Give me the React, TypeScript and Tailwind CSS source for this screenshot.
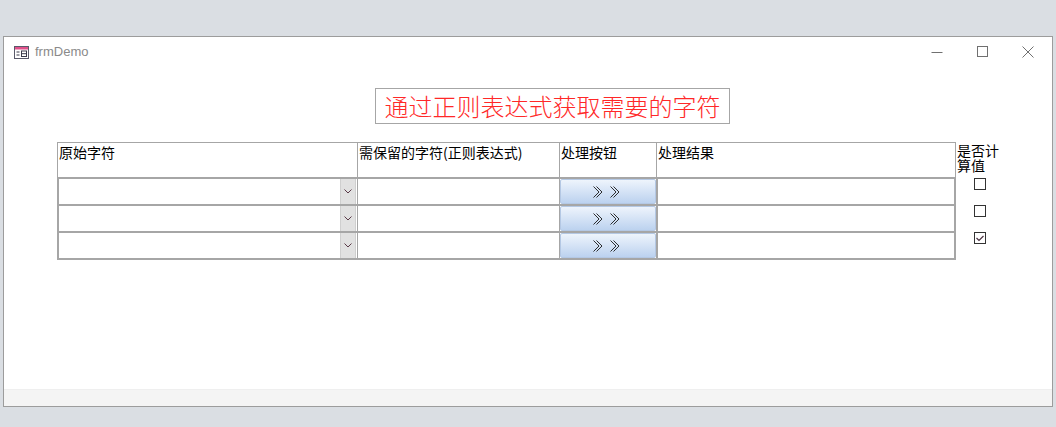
const cjk = "font-['SimSun','Noto_Sans_CJK_SC',sans-serif]";

const FormIcon = () => (
  <svg width="15" height="13" viewBox="0 0 15 13" className="shrink-0">
    <rect x="0.5" y="0.5" width="14" height="12" fill="#fff" stroke="#5a5a6a" />
    <rect x="1" y="1" width="13" height="2.5" fill="#e0508a" />
    <path d="M2.5 6h3M2.5 9h3" stroke="#3a3a4a" />
    <rect x="7.5" y="5" width="5" height="5.5" fill="#fff" stroke="#3a3a4a" />
    <path d="M7.5 7.7h5" stroke="#3a3a4a" />
  </svg>
);

const WindowControls = () => (
  <div className="flex items-center h-full">
    <svg width="12" height="12" viewBox="0 0 12 12" className="mr-[33px]">
      <path d="M0.5 6.5h11" stroke="#707070" />
    </svg>
    <svg width="12" height="12" viewBox="0 0 12 12" className="mr-[34px]">
      <rect x="1.5" y="0.5" width="10" height="10" fill="none" stroke="#707070" />
    </svg>
    <svg width="12" height="12" viewBox="0 0 12 12" className="mr-[18px]">
      <path d="M0.5 0.5l11 11M11.5 0.5l-11 11" stroke="#707070" />
    </svg>
  </div>
);

const Combo = () => (
  <div className="flex h-full bg-white">
    <div className="flex-1" />
    <div className="w-[16px] mr-[1px] bg-[#e1e1e1] border-x border-[#cfcfcf] flex items-center justify-center">
      <svg width="8" height="5" viewBox="0 0 8 5">
        <path d="M0.5 0.5l3.5 3.5 3.5-3.5" fill="none" stroke="#5a3a48" />
      </svg>
    </div>
  </div>
);

// hollow double chevrons, like the "》" glyph of the original font
const Chevrons = () => (
  <svg width="30" height="12" viewBox="0 0 30 12">
    {[0, 17].map((x) => (
      <g key={x} fill="none" stroke="#1a1a1a" strokeWidth="0.9">
        <path d={`M${x + 0.5} 0.5l5.5 5.5-5.5 5.5`} />
        <path d={`M${x + 3.5} 0.5l5.5 5.5-5.5 5.5`} />
      </g>
    ))}
  </svg>
);

const RunButton = () => (
  <div className="h-full rounded-[2px] border border-[#b4c8e4] bg-gradient-to-b from-[#eef4fc] to-[#bcd2ef] flex items-center justify-center">
    <Chevrons />
  </div>
);

const CheckBox = ({ checked }: { checked?: boolean }) => (
  <div className="w-[12px] h-[12px] border border-[#333] bg-white flex items-center justify-center">
    {checked && (
      <svg width="10" height="10" viewBox="0 0 10 10">
        <path d="M1.5 5l2.5 2.5 4.5-4.5" fill="none" stroke="#4a3040" strokeWidth="1.2" />
      </svg>
    )}
  </div>
);

const rows = [false, false, true];

export default function App() {
  return (
    <div className="min-h-screen bg-[#dadee3] pt-[36px] px-[3px]">
      <div className="h-[371px] border border-[#9c9c9c] bg-white flex flex-col">
        <div className="h-[30px] flex items-center justify-between">
          <div className="flex items-center pl-[10px] gap-[6px]">
            <FormIcon />
            <span className="font-['Liberation_Sans',sans-serif] text-[13px] text-[#8a8a8a]">frmDemo</span>
          </div>
          <WindowControls />
        </div>

        <div className="flex-1 flex flex-col">
          <div className="mt-[21px] ml-[371px] w-[355px] h-[36px] border border-[#a6a6a6] flex items-center justify-center">
            <span className={`${cjk} text-[24px] leading-none text-[#ff2828] font-light`}>通过正则表达式获取需要的字符</span>
          </div>

          <div className="mt-[18px] ml-[53px] flex flex-col">
            <div className={`flex h-[35px] ${cjk} text-[14px] leading-[15px] text-black`}>
              <div className="w-[300px] border-t border-l border-[#a6a6a6] pl-[1px] pt-[2px]">原始字符</div>
              <div className="w-[202px] border-t border-l border-[#a6a6a6] pl-[1px] pt-[2px]">需保留的字符(正则表达式)</div>
              <div className="w-[97px] border-t border-l border-[#a6a6a6] pl-[1px] pt-[2px]">处理按钮</div>
              <div className="w-[300px] border-t border-x border-[#a6a6a6] pl-[1px] pt-[2px]">处理结果</div>
              <div className="w-[44px] pl-[1px] pt-[1px] leading-[15px]">是否计算值</div>
            </div>
            {rows.map((checked, i) => (
              <div key={i} className="flex h-[27px]">
                <div className={`w-[300px] border-t-2 border-l-2 border-[#a6a6a6] ${i === 2 ? "border-b-2 h-[29px]" : ""}`}>
                  <Combo />
                </div>
                <div className={`w-[202px] border-t-2 border-l border-[#a6a6a6] ${i === 2 ? "border-b-2 h-[29px]" : ""}`} />
                <div className={`w-[97px] border-t-2 border-l border-[#a6a6a6] ${i === 2 ? "border-b-2 h-[29px]" : ""}`}>
                  <RunButton />
                </div>
                <div className={`w-[300px] border-t-2 border-x-2 border-[#a6a6a6] ${i === 2 ? "border-b-2 h-[29px]" : ""}`} />
                <div className="w-[44px] pl-[18px] pt-[1px]">
                  <CheckBox checked={checked} />
                </div>
              </div>
            ))}
          </div>
        </div>

        <div className="h-[17px] bg-[#f4f4f4] border-t border-[#efefef]" />
      </div>
    </div>
  );
}
